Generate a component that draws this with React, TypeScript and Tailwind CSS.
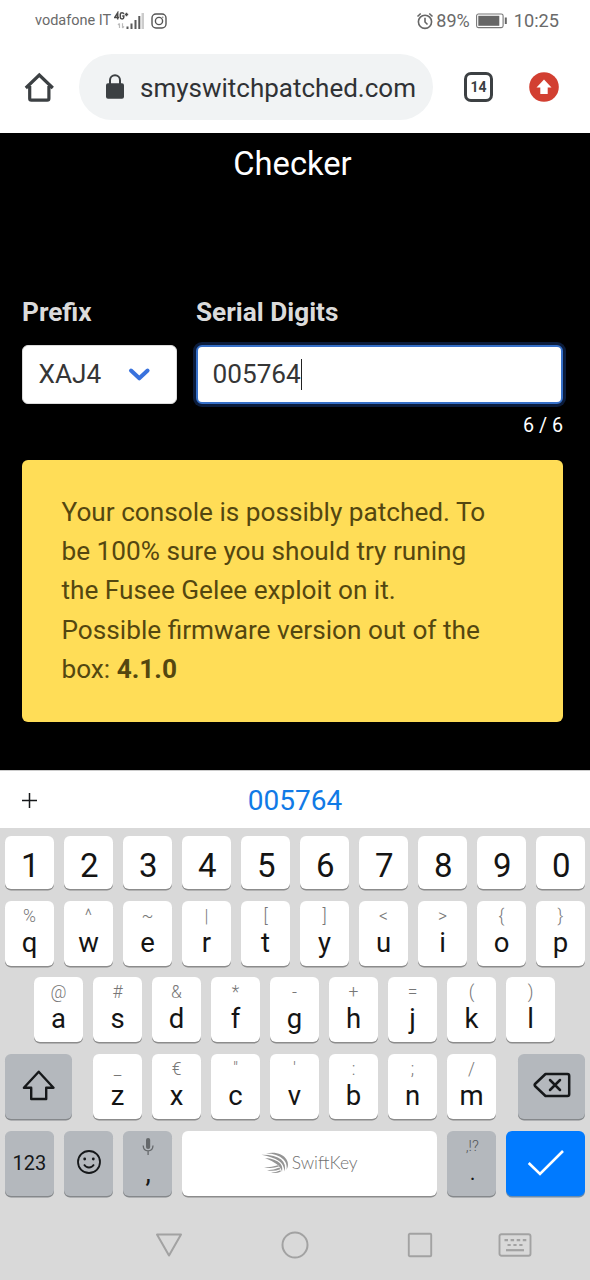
import React from "react";

type Hinted = [string, string];

const numbers = ["1", "2", "3", "4", "5", "6", "7", "8", "9", "0"];
const topRow: Hinted[] = [["q", "%"], ["w", "^"], ["e", "~"], ["r", "|"], ["t", "["], ["y", "]"], ["u", "<"], ["i", ">"], ["o", "{"], ["p", "}"]];
const homeRow: Hinted[] = [["a", "@"], ["s", "#"], ["d", "&"], ["f", "*"], ["g", "-"], ["h", "+"], ["j", "="], ["k", "("], ["l", ")"]];
const bottomRow: Hinted[] = [["z", "_"], ["x", "€"], ["c", "\""], ["v", "'"], ["b", ":"], ["n", ";"], ["m", "/"]];

function LetterKey({ letter, hint }: { letter: string; hint: string }) {
  return (
    <div className="flex h-[65px] w-[49px] flex-col items-center rounded-[6px] bg-white pt-[3px] shadow-[0_1.5px_0_#8c8c8c]">
      <span className="h-[24px] text-[17.5px] leading-[24px] font-light text-[#777]">{hint}</span>
      <span className="h-[30px] text-[27.5px] leading-[30px] text-[#141414]">{letter}</span>
    </div>
  );
}

const grayKey = "flex h-[65px] items-center justify-center rounded-[6px] bg-[#b4b8bd] shadow-[0_1.5px_0_#85888b]";

function StatusBar() {
  return (
    <div className="flex h-[41px] items-center justify-between pr-[31px] pl-[35px] text-[#6a6a6a]">
      <div className="flex items-center">
        <span className="text-[14.5px] leading-5 whitespace-nowrap">vodafone IT</span>
        <svg className="ml-[3px]" width="32" height="20" viewBox="0 0 32 20">
          <g fill="none" stroke="#4c4c4c" strokeWidth="1.5">
            <path d="M3.700 8.500V1.800L.700 6.500H5M9.800 3.200Q9.500 1.700 8.100 1.700Q6.300 1.700 6.300 3.300V6.300Q6.300 7.900 8.100 7.900Q9.800 7.900 9.800 6.300V5.100H8.200M10.800 3.500H14.200M12.500 1.800V5.200" />
          </g>
          <path d="M5.500 12.500V17M4 14L5.500 12.300M8.500 12.300V17M8.500 17L10 15.300" stroke="#bbb" strokeWidth="1.200" fill="none" />
          <path d="M12.500 15.500h2V18h-2zM16.500 12.500h2V18h-2zM20.500 9h2V18h-2zM24.300 5h2V18h-2z" fill="#5a5a5a" />
          <path d="M27.500 2h2.500V18h-2.500z" fill="#ccc" />
        </svg>
        <svg className="ml-[3.500px]" width="18" height="18" viewBox="0 0 18 18" fill="none" stroke="#555" strokeWidth="1.4">
          <rect x="2" y="2" width="14" height="14" rx="4" />
          <circle cx="9" cy="9" r="3.600" />
          <circle cx="12.800" cy="5.200" r=".6" fill="#555" stroke="none" />
        </svg>
      </div>
      <div className="flex items-center">
        <svg width="18" height="18" viewBox="0 0 18 18" fill="none" stroke="#666" strokeWidth="1.6">
          <circle cx="9" cy="9.800" r="6.600" />
          <path d="M9 5.800V10L11.500 12.500M1.500 4.500L4.700 1.500M16.500 4.500L13.300 1.500" />
        </svg>
        <span className="ml-[2px] text-[18px] leading-5">89%</span>
        <svg className="ml-[6px]" width="32" height="16" viewBox="0 0 32 16">
          <rect x=".6" y="1" width="26.500" height="13.600" rx="1.800" fill="none" stroke="#777" strokeWidth="1.100" />
          <rect x="2.300" y="2.800" width="21" height="10" fill="#666" />
          <rect x="28.800" y="4.500" width="2" height="6.500" fill="#666" />
        </svg>
        <span className="ml-[6px] text-[18.200px] leading-5">10:25</span>
      </div>
    </div>
  );
}

function BrowserBar() {
  return (
    <div className="flex h-[92px] items-start pt-[13px]">
      <svg className="mt-[17px] ml-[24px]" width="31" height="32" viewBox="0 0 31 32" fill="none" stroke="#3c4043" strokeWidth="3.200">
        <path d="M5.700 15V27.500Q5.700 29.200 7.400 29.200H23.200Q24.900 29.200 24.900 27.500V15M1.800 17L15.300 4L28.800 17" />
      </svg>
      <div className="ml-[24px] flex h-[66px] w-[354px] items-center rounded-full bg-[#f1f3f4]">
        <svg className="ml-[26px]" width="20" height="26" viewBox="0 0 20 26">
          <rect x="1" y="9.200" width="18" height="15.500" rx="2" fill="#3c4043" />
          <path d="M5 10V6.300A5 5 0 0 1 15 6.300V10" fill="none" stroke="#3c4043" strokeWidth="2" />
        </svg>
        <span className="ml-[15px] pt-[2px] text-[26px] leading-8 whitespace-nowrap text-[#303235]">smyswitchpatched.com</span>
      </div>
      <div className="mt-[18px] ml-[31px] flex h-[30px] w-[29px] items-center justify-center rounded-[7px] border-[3px] border-[#3c4043] text-[14px] font-bold text-[#3c4043]">14</div>
      <svg className="mt-[18px] ml-[36px]" width="30" height="30" viewBox="0 0 30 30">
        <circle cx="15" cy="15" r="14.800" fill="#d23f31" />
        <path d="M15 7.500L22.500 15.500H18.700V22H11.300V15.500H7.500Z" fill="#fff" />
      </svg>
    </div>
  );
}

function CheckerPage() {
  return (
    <div className="h-[637px] bg-black pr-[27px] pl-[22px]">
      <h1 className="h-[62px] text-center text-[32.700px] leading-[62px] text-white">Checker</h1>
      <div className="mt-[98px] flex h-[39px] text-[26.200px] leading-[39px] font-bold text-[#dbdbdb]">
        <span className="w-[174px]">Prefix</span>
        <span>Serial Digits</span>
      </div>
      <div className="mt-[13px] flex text-[26.200px] leading-[39px] text-[#363636]">
        <div className="flex h-[59px] w-[155px] items-center rounded-[6px] border border-[#dbdbdb] bg-white pl-[15.500px]">
          <span className="w-[88px]">XAJ4</span>
          <svg width="24" height="16" viewBox="0 0 24 16" fill="none" stroke="#3972dd" strokeWidth="4" strokeLinecap="round" strokeLinejoin="round">
            <path d="M4 3.500L12.300 11.300L20.600 3.500" />
          </svg>
        </div>
        <div className="ml-[19px] flex h-[59px] w-[367px] items-center rounded-[6px] border-2 border-[#3670c9] bg-white pl-[14.500px] shadow-[0_0_0_3px_#0b1c3c]">
          <span>005764</span>
          <span className="h-[31px] w-[1.500px] bg-[#222]" />
        </div>
      </div>
      <div className="mt-[7px] h-[30px] text-right text-[19.700px] leading-[30px] text-white">6 / 6</div>
      <div className="mt-[19px] h-[262px] w-[541px] rounded-[6px] bg-[#ffdd57] pt-[32.700px] pl-[39.500px] text-[26.200px] leading-[39.300px] whitespace-nowrap text-[#544710]">
        <p>Your console is possibly patched. To<br />be 100% sure you should try runing<br />the Fusee Gelee exploit on it.<br />Possible firmware version out of the<br />box: <b>4.1.0</b></p>
      </div>
    </div>
  );
}

function Keyboard() {
  return (
    <div className="h-[452px] bg-[#d9d9d9] px-[5px] pt-[8px]">
      <div className="flex gap-[10px]">
        {numbers.map((n) => (
          <div key={n} className="flex h-[53px] w-[49px] items-center justify-center rounded-[6px] bg-white pt-[7px] pl-[1.500px] text-[33px] leading-9 text-[#141414] shadow-[0_1.500px_0_#8c8c8c]">{n}</div>
        ))}
      </div>
      <div className="mt-[12px] flex gap-[10px]">
        {topRow.map(([l, h]) => <LetterKey key={l} letter={l} hint={h} />)}
      </div>
      <div className="mt-[11.400px] flex justify-center gap-[10px] pr-[1px]">
        {homeRow.map(([l, h]) => <LetterKey key={l} letter={l} hint={h} />)}
      </div>
      <div className="mt-[11.600px] flex justify-between">
        <div className={grayKey + " w-[67px]"}>
          <svg className="mr-[1px]" width="34" height="32" viewBox="0 0 34 32" fill="none" stroke="#16181a" strokeWidth="2.400" strokeLinejoin="round">
            <path d="M17.700 1.700L32.500 17.700H25.200V29H10.200V17.700H2.900Z" />
          </svg>
        </div>
        <div className="flex gap-[10px] pr-[1px]">
          {bottomRow.map(([l, h]) => <LetterKey key={l} letter={l} hint={h} />)}
        </div>
        <div className={grayKey + " w-[67px]"}>
          <svg className="mt-[-2px] ml-[1px]" width="38" height="26" viewBox="0 0 38 26" fill="none" stroke="#16181a" strokeWidth="2.500" strokeLinejoin="round" strokeLinecap="round">
            <path d="M12.500 2H34.500Q36.200 2 36.200 3.700V22.300Q36.200 24 34.500 24H12.500L2 14Q1.300 13 2 12Z" />
            <path d="M17 8L27 18M27 8L17 18" />
          </svg>
        </div>
      </div>
      <div className="mt-[12px] flex gap-[10px]">
        <div className={grayKey + " w-[49px] pb-[1px] text-[20px] text-[#16181a]"}>123</div>
        <div className={grayKey + " w-[49px]"}>
          <svg className="mt-[-2px] ml-[1px]" width="26" height="26" viewBox="0 0 26 26" fill="none" stroke="#16181a" strokeWidth="1.800">
            <circle cx="13" cy="13" r="11" />
            <path d="M8 15.500Q10 18.500 13 18.500Q16 18.500 18 15.500" />
            <circle cx="8.700" cy="10" r="1.400" fill="#16181a" stroke="none" />
            <circle cx="17.300" cy="10" r="1.400" fill="#16181a" stroke="none" />
          </svg>
        </div>
        <div className={grayKey + " w-[49px] flex-col"}>
          <svg className="mt-[5px] ml-[1px]" width="14" height="18" viewBox="0 0 14 18">
            <rect x="5" y="0" width="4.200" height="11" rx="2.100" fill="#65686b" />
            <path d="M2.200 7.500Q2.400 12.800 7.100 12.800Q11.800 12.800 12 7.500M7.100 13V17" fill="none" stroke="#65686b" strokeWidth="1.300" />
          </svg>
          <span className="ml-[2px] h-[38px] text-[27px] leading-[34px] text-[#16181a]">,</span>
        </div>
        <div className="flex h-[65px] w-[256px] items-center rounded-[6px] bg-white pl-[79px] shadow-[0_1.500px_0_#8c8c8c]">
          <svg width="29" height="22" viewBox="0 0 29 22" fill="#949494">
            <path d="M5 1.600C14 -.5 22 2 25.500 7.500Q28.500 12.500 25.500 18Q26.500 11.500 22.500 7.500Q16 1.500 5 1.600Z" />
            <path d="M.500 2.800Q14 2.600 20.200 7.500Q25.800 12.500 23.300 19.500Q23.300 12.500 18 9Q12 5 .500 2.800Z" />
            <path d="M4 6Q14.500 6.800 19 11.200Q22.200 14.500 21 20Q19.800 14.800 15.500 12Q11.500 9 4 6Z" />
            <path d="M3 15.500Q11.500 15 16.800 13.200L18 14.600Q11.500 17 3 15.500ZM6 18.300Q13 18 18.500 15.500L19.300 17.200Q13 19.700 6 18.300ZM10 20.700Q15 20.500 19.500 18.200L19.700 19.800Q15 21.800 10 20.700Z" />
          </svg>
          <span className="ml-[2px] pb-[1px] font-['Lato',sans-serif] text-[17.500px] font-light text-[#707070]">SwiftKey</span>
        </div>
        <div className={grayKey + " w-[49px] flex-col"}>
          <span className="h-[32px] pl-[1px] text-[15px] leading-[31px] font-light text-[#55585b]">,!?</span>
          <span className="h-[33px] pl-[2px] text-[22px] leading-[19px] text-[#16181a]">.</span>
        </div>
        <div className="flex h-[65px] w-[79px] items-center justify-center rounded-[6px] bg-[#007aff] shadow-[0_1.500px_0_#6c8cab]">
          <svg width="38" height="28" viewBox="0 0 38 28" fill="none" stroke="#fff" strokeWidth="2.600">
            <path d="M1.700 14L13 25L36 2" />
          </svg>
        </div>
      </div>
      <div className="mt-[34.500px] flex h-[30px] items-center pl-[150px] text-[#a2a2a2]">
        <svg width="28" height="28" viewBox="0 0 28 28" fill="none" stroke="currentColor" strokeWidth="2" strokeLinejoin="round"><path d="M2 3.500H26L14 24.500Z" /></svg>
        <svg className="ml-[97px]" width="30" height="30" viewBox="0 0 30 30" fill="none" stroke="currentColor" strokeWidth="2"><circle cx="15" cy="15" r="12.500" /></svg>
        <svg className="ml-[97px]" width="26" height="26" viewBox="0 0 26 26" fill="none" stroke="currentColor" strokeWidth="1.900"><rect x="1.800" y="1.800" width="22.400" height="22.400" rx="1" /></svg>
        <svg className="ml-[65px]" width="34" height="24" viewBox="0 0 34 24" fill="none" stroke="currentColor" strokeWidth="1.900">
          <rect x="1.500" y="1.200" width="31" height="21.500" rx="2" />
          <path d="M6.500 7.200H28.500" strokeWidth="2.200" strokeDasharray="3.500 2.600" />
          <path d="M9.500 12H25" strokeWidth="2.200" strokeDasharray="3.200 2.700" />
          <path d="M8 17.200H26" strokeWidth="2.200" />
        </svg>
      </div>
    </div>
  );
}

export default function App() {
  return (
    <div className="h-[1280px] w-[590px] overflow-hidden bg-white font-['Roboto',sans-serif]">
      <StatusBar />
      <BrowserBar />
      <CheckerPage />
      <div className="flex h-[58px] items-center justify-between border-t border-[#ccc] px-[22px] pt-[2px]">
        <svg width="15" height="15" viewBox="0 0 15 15" stroke="#16181a" strokeWidth="1.500"><path d="M0 7.500H15M7.500 0V15" /></svg>
        <span className="text-[28px] leading-8 text-[#117ae6]">005764</span>
        <span className="w-[15px]" />
      </div>
      <Keyboard />
    </div>
  );
}
